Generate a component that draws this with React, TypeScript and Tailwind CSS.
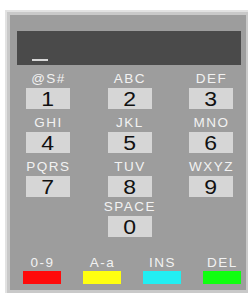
import React from 'react';

const rows = [
  [
    { label: '@S#', key: '1' },
    { label: 'ABC', key: '2' },
    { label: 'DEF', key: '3' },
  ],
  [
    { label: 'GHI', key: '4' },
    { label: 'JKL', key: '5' },
    { label: 'MNO', key: '6' },
  ],
  [
    { label: 'PQRS', key: '7' },
    { label: 'TUV', key: '8' },
    { label: 'WXYZ', key: '9' },
  ],
];

const modes = [
  { label: '0-9', color: 'bg-[#ff0a0a]' },
  { label: 'A-a', color: 'bg-[#ffff10]' },
  { label: 'INS', color: 'bg-[#22eef2]' },
  { label: 'DEL', color: 'bg-[#10ff10]' },
];

function Key({ label, value }: { label: string; value: string }) {
  return (
    <div className="flex flex-col items-center">
      <div className="h-[14px] pl-[1px] text-[13.5px] leading-[14px] tracking-[1.5px] text-[#f2f2f2]">
        {label}
      </div>
      <div className="mt-[2px] flex h-[21px] w-[44px] items-center justify-center bg-[#d6d6d6] pt-[1px] text-[20px] leading-none text-[#111]">
        <span className="inline-block scale-x-[1.15]">{value}</span>
      </div>
    </div>
  );
}

export default function App() {
  return (
    <div
      className="h-[293px] w-[248px] overflow-hidden bg-white pl-[5px] pt-[10px]"
      style={{ fontFamily: '"Liberation Sans", Arial, sans-serif' }}
    >
      <div className="h-[283px] w-[243px] border-l-2 border-t-2 border-[#e2e2e2] bg-[#c9c9c9] pb-[3px] pl-[3px] pr-[2px] pt-[3px]">
        <div className="h-[275px] w-[236px] bg-[#9d9d9d] pl-[7px] pt-[16px]">
          <div className="flex h-[34px] w-[224px] items-end bg-[#4a4a4a] pb-[4px] pl-[15px]">
            <div className="h-[2px] w-[16px] bg-[#d8d8d8]" />
          </div>

          <div className="-ml-[7px]">
            {rows.map((row, i) => (
              <div key={i} className="mt-[7px] grid grid-cols-[76px_87px_76px]">
                {row.map((k) => (
                  <Key key={k.key} label={k.label} value={k.key} />
                ))}
              </div>
            ))}
            <div className="mt-[3px] grid grid-cols-[76px_87px_76px]">
              <div />
              <Key label="SPACE" value="0" />
              <div />
            </div>

            <div className="mt-[19px] grid grid-cols-[repeat(4,60px)] pl-[2px]">
              {modes.map((m) => (
                <div key={m.label} className="flex flex-col items-center">
                  <div className="h-[14px] pl-[1px] text-[13.5px] leading-[14px] tracking-[1.5px] text-[#f2f2f2]">
                    {m.label}
                  </div>
                  <div className={`mt-[1px] h-[13px] w-[38px] ${m.color}`} />
                </div>
              ))}
            </div>
          </div>
        </div>
      </div>
    </div>
  );
}
